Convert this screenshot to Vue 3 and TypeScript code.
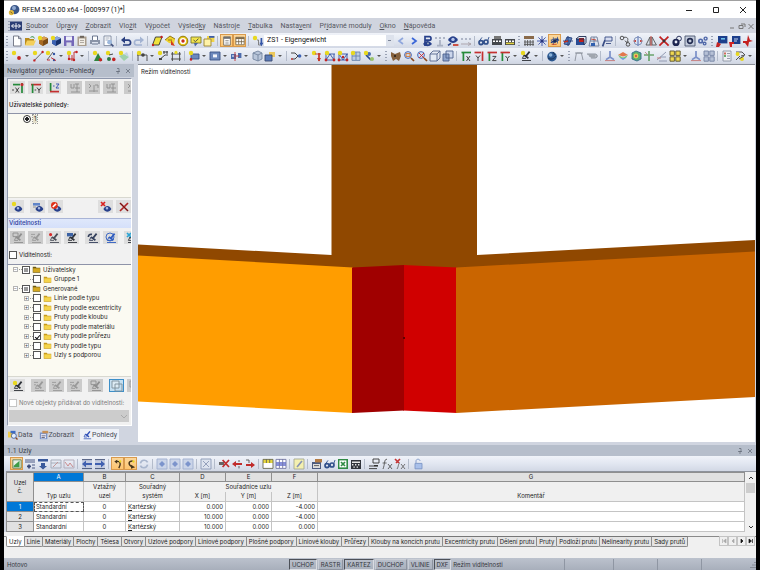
<script setup lang="ts">
import { h, ref } from 'vue'

type Shape = [paint: string, d: string]

const box = (x: number, y: number, w: number, k: number) => `M${x} ${y}h${w}v${k}h${-w}z`
const disc = (x: number, y: number, r: number) =>
  `M${x - r} ${y}a${r} ${r} 0 1 0 ${2 * r} 0a${r} ${r} 0 1 0 ${-2 * r} 0z`

const star: Shape = ['f#e8d820', disc(3, 3, 2.2)]
const eye: Shape[] = [
  ['f#27408b', 'M3.4 8c2-4 6-4 8 0-2 3.600-6 3.600-8 0z'],
  ['f#a8b8e0', disc(7, 7.2, 1.3)],
]
const lens: Shape[] = [
  ['f#cfe0f5', disc(5, 5, 3.6)],
  ['s#3b5bb0', disc(5, 5, 3.4)],
  ['t#8b4a20', 'M8 8l3 3'],
]
const scope = (c: string): Shape[] => [
  ['t' + c, 'M9.6 1.6L5.6 6.6M4 5l4.400 3.200'],
  ['s' + c, 'M4 5l-1.600 3.400H6'],
  ['s' + c, 'M2 10.5h9'],
]
const film = (c: string): Shape[] => [
  ['f' + c, box(1, 4, 10, 6)],
  ['f#fff', box(2, 5.4, 2, 1.6) + box(5, 5.4, 2, 1.6) + box(8, 5.4, 2, 1.6)],
]
const cube = (a: string, b: string, c: string): Shape[] => [
  ['f' + a, 'M2 4l5-2.4 4 1.6v5L6 11 2 8.6z'],
  ['f' + b, 'M2 4l4 1.8V11L2 8.6z'],
  ['f' + c, 'M2 4l5-2.4 4 1.6-5 2.6z'],
]
const crossX: Shape = ['s#333', 'M6.500 6l3.500 5M10 6l-3.500 5']
const letterY: Shape = ['s#333', 'M6.500 6l2 2.500L10.500 6M8.500 8.500V11']
const letterZ: Shape = ['s#333', 'M6.500 6.400H10L6.500 10.600H10.400']
const axis = (up: string, side: string, letter: Shape): Shape[] => [
  ['t' + up, 'M3.400 11V2.500'],
  ['t' + side, 'M1.500 2.500h9.500'],
  letter,
]

const glyphs: Record<string, Shape[]> = {
  logo: [['f#3a5688', disc(6.8, 5.6, 4.6)], ['f#8fa9d0', disc(6, 4, 2)], ['f#e0b840', disc(3.4, 8.6, 2.6)], ['s#6b5210', 'M2.4 7.6l2 2']],
  mdi: [['f#2b3d74', box(0, 1.5, 12, 9)], ['s#fff', 'M6 3v6M1.5 6h9M3.6 4L1.6 6l2 2M8.4 4l2 2-2 2']],
  page: [['f#fff', 'M2.5 1h5l2.5 2.6V11h-7.5z'], ['s#6c7080', 'M2.5 1h5l2.5 2.6V11h-7.5zM7.5 1v2.6H10']],
  open: [['f#b98a1c', 'M1 3h4l1 1h4v6H1z'], ['f#f4cf5c', 'M3 5.5h9l-2.4 5H1z'], ['s#2c8a34', 'M6.5 2.4c2-1.4 3.5-.6 4 1']],
  block: [...cube('#7a4a16', '#a86a24', '#dca050'), star],
  blueblock: [...cube('#16306c', '#3c62b4', '#86a4e0'), star],
  save: [['f#7468b8', box(1, 1, 10, 10)], ['f#eef0fa', box(3, 1.4, 6, 4)], ['f#d8dce8', box(3.4, 7.4, 5, 3.6)]],
  paste: [['f#a89c8c', box(1.5, 1.5, 9, 9.5)], ['f#f0ece4', box(3, 3.5, 6, 6.5)], ['f#6c645c', box(4, .8, 4, 2)], ['s#a8a298', 'M4 5.5h4M4 7.5h4']],
  print: [['f#fff', 'M3.5 1h4.5l1 4H3z'], ['f#8a94a8', box(1, 5, 10, 4)], ['f#dde3ef', box(3, 7, 6, 4)], ['s#596682', 'M3.5 5V1H8.5v4M3 9h6']],
  preview: [['f#fff', box(2, 1, 7, 9.6)], ['s#7b869c', box(2, 1, 7, 9.6)], ['s#9ca6b8', 'M3.5 3h4M3.5 5h3'], ['f#9db8dc', disc(7.6, 7.2, 2.4)], ['t#40507c', 'M9 9l2.4 2.4']],
  undo: [['t#2a3f80', 'M3 5.2h5.4c3 0 2.8 4.8 0 4.8H3'], ['f#2a3f80', 'M5 1.6v7L1 5z']],
  redo: [['t#a3b3d2', 'M9 5.2H3.6c-3 0-2.800 4.800 0 4.800h5.400'], ['f#a3b3d2', 'M7 1.6v7L11 5z']],
  plane: [['f#f0e23c', 'M4.5 2H11L8 10H1.5z'], ['s#333', 'M4.5 2H11L8 10H1.5z'], ['f#c02020', disc(2, 10, 1.2) + disc(10.6, 2, 1.2)]],
  tag: [['f#efd12c', 'M1 5l5-4 5 3-1 5-5-1z'], ['f#d23b20', 'M7 5l4 6-4-1z'], ['s#8a6f10', 'M1 5l5-4 5 3M4 5h4']],
  target: [['f#e8c81c', disc(6, 6, 5)], ['f#fff', disc(6, 6, 3.1)], ['f#c83018', disc(6, 6, 1.7)], ['s#8a7410', disc(6, 6, 4.8)]],
  note: [['f#f2e44c', box(1, 2, 10, 6)], ['s#7d7a30', box(1, 2, 10, 6)], ['f#4a64a0', 'M4 8h4l-3 3.4z'], ['s#444', 'M3.5 5l2 1.6 3-3']],
  windows: [['f#f2d54c', box(4, 1, 7.4, 6)], ['f#fff3a8', box(1, 4, 7, 7)], ['s#9a8430', box(1, 4, 7, 7)], ['f#3c5ca8', box(6, 1, 5.4, 1.8)]],
  navpane: [['f#fff', box(2, 1, 8, 10)], ['s#5b5b5b', box(2, 1, 8, 10)], ['f#707070', box(2, 1, 8, 2.4)], ['s#888', 'M4 5.4h4M4 7.4h4M4 9.4h4']],
  tablepane: [['f#fff', box(1, 1.5, 10, 9)], ['s#6b5a3c', box(1, 1.5, 10, 9) + 'M4.4 4v6M7.7 4v6M1 6.8h10'], ['f#7f6a48', box(1, 1.5, 10, 2.2)]],
  load: [star, ['s#777', 'M5 5h1.5v5H10'], ['t#3556a8', 'M9.4 3v6'], ['f#3556a8', 'M7.4 7.8h4l-2 3.4z']],
  prev: [['t#8fa6dc', 'M8 3L4 6l4 3']],
  next: [['t#3a66d8', 'M4 3l4 3-4 3']],
  eyeP: [['t#27408b', 'M4 11V1.6h4.5c2 0 2 3.6 0 3.6H4'], ['f#27408b', 'M2 9c3-4 6-4 9 0-3 3-6 3-9 0z'], ['f#9ab', disc(7, 8.4, 1)]],
  xx: [['s#a8b0c2', 'M1 2l2 2M3 2L1 4M5 2l2 2M7 2L5 4M9 2l2 2M11 2L9 4'], ['t#a8b0c2', 'M6 5v5M3 10.600h6']],
  eyeload: [['f#27408b', 'M1 5c3-5 7-5 10 0-3 4-7 4-10 0z'], ['f#b4c4ec', disc(6, 4.4, 1.7)], ['t#c83828', 'M6 10h5.4'], ['t#27408b', 'M1 10.4l3-2']],
  xxline: [['s#a8b0c2', 'M1 3l2 2M3 3L1 5M5 3l2 2M7 3L5 5M9 3l2 2M11 3L9 5'], ['s#a8a0a8', 'M1 9h10M8 7.500L11 9l-3 1.500']],
  glasses: [['t#32518c', disc(3, 7.6, 2) + disc(8, 7, 2)], ['s#32518c', 'M1.4 6L4 2.4M9.6 6l1.4-4']],
  filmprint: [['f#777', box(3, 1, 7, 4)], ...film('#44474c')],
  film: [...film('#44474c'), ['f#e0d040', box(2, 7.600, 8, 1.600)]],
  grid: [['f#8a6a4a', box(1, 1, 10, 3)], ['s#555', 'M2 5v6M4.6 5v6M7.2 5v6M10 5v6M1 7h10M1 9.4h10']],
  snow: [['s#3b50a8', 'M6 1v10M1 6h10M2.4 2.4l7.2 7.2M9.6 2.4L2.4 9.6'], ['f#26347c', disc(6, 6, 1.6)]],
  rotate3: [['s#2a4c94', 'M1 5l6-2 4 2-6 3zM4 1.500v9M9 1v8'], ['t#1c3c84', 'M1 8l9-4.500'], ['s#c03020', 'M2 10h6'], ['f#1c2c54', disc(6, 6, 2)]],
  rotate2: [['f#5c80bc', 'M2 9l3-7 5 1-3 7z'], ['s#24407c', 'M2 9l3-7 5 1-3 7zM1 6h10M6 1v10'], ['t#c03020', 'M2 7l4-1']],
  redcube: [['f#2a4c94', box(1, 4, 8, 6)], ['f#c42018', box(4, 3, 5, 4)], ['s#1c2c54', 'M1 4l3-2.500h7v6L9 10M9 10v-6H1']],
  wire: [['s#6c7c98', 'M3 2h6l2 9H1zM2 6h8M6 2v9'], ['f#3060b0', box(3, 8, 4, 3)], ['s#c04030', 'M3 4l5 1']],
  flag: [['t#384c84', 'M1.6 11.400L4 5'], ['f#d6dcf0', box(4, 2, 7, 4)], ['s#384c84', box(4, 2, 7, 4) + 'M5 8.5h5']],
  link: [['s#444', disc(3, 3, 1.8) + disc(9, 9.4, 1.8)], ['s#444', 'M4.600 2.400c5-1 5 2.600 3 5M6 5.600l1.600 2 2-1']],
  mirror: [['s#3b5cae', 'M6 1v10'], ['s#7a8cb4', disc(6, 6, 4)], ['f#c02c24', 'M4 5l-3 1 3 1zM8 5l3 1-3 1z']],
  tri: [['s#555', 'M5 2v8H1zM7 2v8h4.4z'], ['s#c02c24', 'M6 1v10']],
  cross: [['t#c42020', 'M1.6 1.6l9 9M10.4 1.6l-9 9'], ['f#333', disc(6, 6, 1.4)]],
  rings: [['f#1c2550', disc(5, 7.4, 3.6)], ['f#e8ecf8', disc(5, 7, 1.4)], ['s#1c2550', disc(8, 3.6, 2.4)]],
  gearbox: [['f#c4ccdc', box(1, 1, 10, 10)], ['s#4c5870', box(1, 1, 10, 10)], ['t#222c50', disc(6, 6, 2.4)]],
  gears: [['f#5068a8', disc(3.600, 6, 2.600) + disc(8.600, 3.600, 2.200) + disc(7.600, 8.600, 2)], ['f#dbe4f8', disc(3.600, 6, 1) + disc(8.600, 3.600, .8) + disc(7.600, 8.600, .7)]],
  monitor: [['f#1c3f8c', box(2, 1, 9.4, 7.4)], ['f#6fc0ea', box(5, 3, 4, 1.6)], ['f#c42424', 'M1 7l4 2-2 3H0z']],
  monitor2: [['f#1c3f8c', box(3, 1, 8.4, 8)], ['s#d8e4f8', 'M5 4h4M5 6h3'], ['f#d02424', 'M0 7h5v2H3v3H1z']],
  redarrow: [['f#c42020', 'M6 0l2 5 3 1-4 1-1 5-3-4H1V6h4z']],
  node: [star, ['f#c42424', disc(8, 8, 1.9)]],
  line: [star, ['s#555', 'M2.400 10.400L10.6 2'], ['f#c42424', disc(2.4, 10.4, 1.2) + disc(10.6, 2, 1.2)]],
  line2: [star, ['s#555', 'M2 10L8 2'], ['f#3454a4', disc(9, 4, 1.2) + disc(9, 10, 1.2)], ['s#c42424', 'M6 7.6l5 3M2 10h3']],
  poly: [star, ['s#c42424', 'M3 5v4h5V2h3M6 5v6'], ['f#c42424', disc(8, 10, 1.2) + disc(10.600, 2, 1.2) + disc(3, 9, 1.200)]],
  support: [['f#30843c', 'M6 3l4.4 8H2z'], ['f#c42424', disc(8.4, 9.8, 1.8)], star],
  hinge: [star, ['f#2c7844', disc(4, 9, 2)], ['f#c42424', disc(8.8, 9.4, 1.8)], ['s#333', 'M4 5l4-1']],
  surf: [['f#9ed0ac', 'M1 6l5-2 5 3-5 4z'], ['f#c2d4e4', 'M6 4l3-2 2 5z'], star],
  member: [['s#444', 'M1 5h10v6M2 2v9'], ['f#444', disc(7, 5, 1.8)], star],
  memberx: [star, ['s#333', 'M2 10L8 5h3'], ['s#333', 'M6 2h5M7 1v3M10 1v3'], ['f#444', box(2, 8, 3, 2)]],
  frame: [['s#444', 'M2.4 2v9M9.6 2v9M1 4h10M1 9h10'], ['f#e8d820', disc(6, 2.4, 1.6)]],
  solid: [['f#6c88bc', box(3, 4, 8, 5)], ['s#3a5486', box(3, 4, 8, 5)], ['f#c42424', disc(3, 9.4, 1.3)], star],
  opening: [['f#6c88bc', box(1, 2, 10, 8)], ['f#f2f4fa', box(4, 4.4, 4, 3)], ['s#3a5486', box(1, 2, 10, 8)]],
  couple: [['f#4c6cac', box(1, 4, 5, 5) + box(8, 3, 3.4, 5)], ['s#c03434', 'M6 6h3M5 2v9'], ['f#a4b8dc', box(2, 5, 2, 2)]],
  hex: [['f#b9c6da', 'M2 3l5-2 4 2v6l-4 2-5-2z'], ['s#75869f', 'M2 3l5-2 4 2v6l-4 2-5-2zM2 3l5 2 4-2M7 5v6']],
  cubes: [['f#5c7cb8', box(1, 5, 7, 6)], ['f#ecc85c', 'M5 2h6v5H8V5H5z'], ['s#3a4a70', box(1, 5, 7, 6)]],
  branch: [['s#333', 'M1 3h4l3 3-3 3H1M8 6h3'], ['f#3c62b4', disc(9.6, 6, 1.8)], ['f#c44', disc(2, 9, 1)]],
  dim: [star, ['t#c43424', 'M8 3v8'], ['s#c43424', 'M4 4h6'], ['f#c43424', 'M6 8h4L8 11.4z']],
  truss: [['s#3454a4', 'M1 4h10M2 4v6h8V4M2 10l4-6 4 6'], ['f#c42424', disc(2, 10, 1.4) + disc(10, 10, 1.4)], star],
  truss2: [['s#3454a4', 'M1 4h10M2 4v6h8V4M2 4l4 6 4-6'], ['f#c42424', disc(2, 10, 1.400) + disc(10, 10, 1.4) + disc(6, 7, 1.200)], star],
  net: [['f#b9cbe4', box(2, 2, 8, 8.4)], ['s#6b84ad', 'M2 2h8v8.4H2zM6 2v8M2 6h8'], star],
  loads: [['f#4c6cac', disc(6, 4, 2)], ['t#27488c', 'M3 5l5 5'], ['f#9ac36a', disc(9, 9, 2)], star],
  ibex: [['f#84603c', 'M1 2l4 2 5-2 1 4-2 5-3-2-3 2-2-5z'], ['f#3a2c20', box(4, 5, 2, 2)]],
  zoomwin: [...lens, ['s#d07028', box(3, 3.600, 4, 2.800)]],
  zoomred: [...lens, ['s#d02828', 'M3 3l5 5M8 3L3 8']],
  box3d: [['f#e4eaf4', box(1, 4, 7, 7)], ['s#56678e', box(1, 4, 7, 7) + 'M1 4l3-3h7v7L8 11M8 4l3-3']],
  copy3d: [['f#ccd6ec', box(4, 1, 7, 7)], ['f#8ea4cc', box(1, 4, 6, 7)], ['s#4c608c', box(1, 4, 6, 7) + box(4, 1, 7, 7)]],
  axX: axis('#258a3a', '#258a3a', crossX),
  axY: [['t#c43030', 'M1.500 2.500H8'], ['t#c43030', 'M9.500 1.500V11'], ['s#333', 'M3 5.500l2 2.500 2-2.500M5 8v3']],
  axZ: axis('#258a3a', '#c43030', letterZ),
  axN: axis('#258a3a', '#c43030', letterY),
  xz: [['t#258a3a', 'M1 2.600h7'], ['t#258a3a', 'M10 1v10'], ['f#c43030', disc(10, 2.600, 1.600)], ['s#333', 'M0 8h2M3.500 5.600l3.400 5M7 5.600l-3.400 5']],
  yz: [['t#c43030', 'M1 2.6h10'], ['t#258a3a', 'M2.6 2v9'], ['s#333', 'M4.600 8h1.600M7 5.600l2 2.600 2-2.600M9 8v3']],
  zz: [['t#258a3a', 'M2.6 1v8'], ['t#c43030', 'M2 9.6h9'], ['s#3450b0', 'M5 4h1.600M8 2h3L8 6h3']],
  grey: [['s#8e8e8e', 'M2 2v4h3V2M8 2v8M6 2h4M6 6h5M2 10h9']],
  grey2: [['s#8e8e8e', 'M2 2l2 2-2 2M8 3h3v3M7 3v7M2 9h9']],
  scopey: [...scope('#2e3138'), star],
  globe: [['f#2c5890', disc(6, 6.6, 4.8)], ['f#8ab2d8', disc(4.6, 5, 1.8)], ['s#183050', 'M2 8c3 2 6 1 8-2M7 2l2 3']],
  arch: [['s#8b919c', 'M2 11L3.4 3h5L10 10M2 3h8']],
  roll: [['f#b6bac2', 'M1 4h8c3 0 3 4 0 4H5z'], ['s#878e9a', 'M1 4h8c3 0 3 4 0 4H5M3 6h6']],
  triad: [['t#7a8fc8', 'M6 1v6M2 9.600l4-2.600 4 2.600'], ['s#c47474', 'M1 10.600h10']],
  iso: [['f#e2774c', 'M1 5l5-3 5 3-5 1.4z'], ['f#7cc47c', 'M1 5l5 2.4L11 5 9 8H3z'], ['f#6c9cdc', 'M3 8h6l-3 2z']],
  mesh: [['f#5cae6c', 'M2 3l4-2 5 2v6l-4 2-5-2z'], ['f#e4cf58', disc(6, 6, 2.4)], ['f#d05c4c', disc(6, 6, 1.2)], ['s#346c8c', 'M2 3l4-2 5 2v6l-4 2-5-2z']],
  plus: [['t#6aa46c', 'M6 1v10M1 5h10'], ['s#b88', 'M2 2l3 3']],
  slope: [['s#8a93ac', 'M1 10L10 2M3 11h8M4 7h6'], ['s#c47474', 'M1 8h4']],
  quads: [['f#f0d850', box(1, 1, 4.4, 4.4) + box(6.8, 1, 4.4, 4.4) + box(1, 6.8, 4.4, 4.4) + box(6.8, 6.8, 4.4, 4.4)], ['s#5a5330', box(1, 1, 4.4, 4.4) + box(6.8, 1, 4.4, 4.4) + box(1, 6.8, 4.4, 4.4) + box(6.8, 6.8, 4.4, 4.4)]],
  bquads: [['f#b6c1d6', box(1, 1, 4.4, 4.4) + box(6.8, 1, 4.4, 4.4) + box(1, 6.8, 4.4, 4.4) + box(6.8, 6.8, 4.4, 4.4)], ['s#7483a4', box(1, 1, 4.4, 4.4) + box(6.8, 1, 4.4, 4.4) + box(1, 6.8, 4.4, 4.4) + box(6.8, 6.8, 4.4, 4.4)]],
  list: [['f#eef0f4', box(2, 1, 8, 10)], ['s#8c94a4', box(2, 1, 8, 10) + 'M6 3.5h3M6 6h3M6 8.5h3'], ['f#6aae6c', box(3, 5, 2, 2)], ['f#d06c5c', box(3, 2.4, 2, 2)]],
  wand: [['s#444', 'M2 2h6l3 3-4 1M2 10l4-4'], ['f#e8d820', disc(3.600, 4, 2) + disc(8, 9, 2)], ['s#444', 'M5 9l5-3']],
  eyestar: [star, ...eye],
  eyelist: [['f#5f84c8', box(1, 2, 7, 2.6)], ['s#888', 'M1 6h3'], ...eye],
  eyeban: [...eye, ['f#e03018', disc(4.4, 4.4, 3.4)], ['t#fff', 'M2.8 6l3.2-3.2']],
  eyex: [...eye, ['t#d82020', 'M1 1l4 4M5 1L1 5']],
  del: [['t#b02020', 'M2 2l8 8M10 2l-8 8'], ['s#5c1818', 'M2 2l8 8']],
  scopeg: [...scope('#8f8f8f'), ['s#8f8f8f', box(1, 1, 5, 3.6)]],
  scopeg2: [...scope('#9a9a9a'), ['s#9a9a9a', 'M1 2.4h4M1 4.8h2']],
  scoper: [...scope('#4a4e58'), ['f#d82c2c', disc(2.6, 2.6, 1.6)]],
  scopeb: [...scope('#2e3138'), ['f#3c62a4', box(1, 1, 6, 3.4)]],
  scopec: [...scope('#34405c'), ['t#34405c', 'M1.400 5c0-2 1-3 3.600-2.600']],
  scopeblue: [...scope('#2f5cc0'), ['s#2f5cc0', disc(5, 5, 4)]],
  scopex: [...scope('#2e3138'), ['t#2ca4d4', 'M1 1l4 4M5 1L1 5']],
  layers: [['f#dcebf4', box(1, 1, 7, 7)], ['s#7e8f98', box(1, 1, 7, 7) + box(4, 4, 7, 7)]],
  layersg: [['s#999', box(1, 1, 6, 6) + box(4, 4, 7, 7)]],
  folder: [['f#c79a1c', 'M1 2.4h4l1 1.2h5v6.6H1z'], ['f#f4d44c', box(1.6, 4.4, 9, 5.2)]],
  folderdk: [['f#6c5a14', 'M1 2.4h4l1 1.2h5v6.6H1z'], ['f#d4a820', box(1.6, 4.4, 9, 5.2)]],
  data: [['f#f0cc4c', box(0, 2, 6, 7)], ['f#3c6cc4', box(3, 1, 6, 3)], ['f#e4eefc', disc(7, 7, 3)], ['s#2c4c94', disc(7, 7, 3)], ['t#8b4a20', 'M9.4 9.4l2 2']],
  display: [['f#7c94c8', box(1, 3, 9, 8)], ['f#eef', box(2.4, 5, 6, 5)], ['f#c89054', box(4, 1, 7, 3)], ['s#445', 'M3 7h5M3 9h4']],
  views: scope('#2f50b8'),
  graph: [['f#e8efe4', box(1, 1, 10, 10)], ['f#3f9c48', 'M2 10V8l7-6v8z'], ['s#45704a', box(1, 1, 10, 10)]],
  rowadd: [['s#3a4a78', 'M1 2h10M1 4h10'], ['t#3a4a78', 'M3 8.4h4M5 6.4v4'], ['s#3a4a78', 'M8 7h3M8 10h3']],
  rowins: [['f#3a5a9c', 'M1 1h10v2.4H1zM4 5h4v3h2L6 11.6 2 8h2z']],
  rowg: [['s#a2a8b6', 'M1 2h10v8H1zM1 5h10'], ['s#c09090', 'M3 9l5-5']],
  rowg2: [['s#b0a8b6', 'M1 2h10v8H1z'], ['s#c88080', 'M2 4l3 4 2-3 3 4']],
  tleft: [['f#c4cce0', box(1, 2, 10, 9)], ['f#4060b0', 'M1 6l4-3.4V5h6v2H5v2.4z'], ['s#3a4a70', 'M1 10.600h10M1 1.600h10']],
  tright: [['f#c4cce0', box(1, 2, 10, 9)], ['f#4060b0', 'M11 6L7 2.600V5H1v2h6v2.4z'], ['s#3a4a70', 'M1 10.6h10M1 1.600h10']],
  hookl: [['t#45351c', 'M4 3c5-1 6 3 3 8'], ['f#45351c', 'M5 .8v5L1.6 3z'], ['f#e8d820', disc(8.6, 3, 1.4)]],
  hookr: [['t#45351c', 'M8 2.4c-5 0-6 4-1 7'], ['f#45351c', 'M6 6.8l5 3-5 2z'], ['f#e8d820', disc(9, 3, 1.4)]],
  refresh: [['t#a9b6cd', 'M2.4 5.400c1-4 6-4 7.2-1M9.6 6.600c-1 4-6 4-7.2 1']],
  cellg: [['f#cad4e8', box(1, 1, 10, 10)], ['s#9fafcf', box(1, 1, 10, 10)], ['f#7c94cc', 'M6 3l3 3-3 3-3-3z']],
  cellx: [['f#dde3ee', box(1, 1, 10, 10)], ['s#8b98b4', box(1, 1, 10, 10) + 'M3 3l6 6M9 3L3 9']],
  rx: [['f#666', box(1, 4, 5, 3)], ['t#c02c2c', 'M4.600 2l6.400 7M11 2L4.600 9']],
  rin: [['f#c02c2c', 'M1 6l4-3v2h6v2H5v2z'], ['s#555', 'M8 2v2M8 8v2.4']],
  rout: [['f#c02c2c', 'M11 7L7 4v2H2v2h5v2z'], ['s#555', 'M2 2h3v3']],
  yellowtab: [['f#fff', box(1, 1.4, 10, 9)], ['f#e8d840', box(1, 1.4, 10, 3.6)], ['s#6a6a50', box(1, 1.4, 10, 9) + 'M4.4 1v4M7.7 1v4']],
  bluetab: [['f#fff', box(1, 1.4, 10, 9)], ['f#8790dc', box(1, 4, 10, 4)], ['s#7478a4', box(1, 1.4, 10, 9) + 'M4.4 1v9M7.7 1v9']],
  pickcell: [['f#f4f0b0', box(1, 1, 10, 10)], ['s#a4a894', box(1, 1, 10, 10)], ['t#8894b4', 'M9 3L4 9']],
  props: [['f#4c5c80', box(1, 4, 9, 7)], ['f#ddd', box(2, 6, 7, 4)], ['f#b47c44', box(4, 1, 7, 3.4)], ['s#555', 'M3 7.600h5']],
  excel: [['f#2f8a44', box(1, 1, 10, 10)], ['f#fff', box(2.4, 2.4, 7, 7)], ['t#2f8a44', 'M4 4l4 4M8 4L4 8']],
  calc: [['f#30343c', box(1, 2, 10, 9)], ['f#e8e8e8', box(2, 3.400, 8, 1.600) + box(2, 6, 1.4, 1.4) + box(5, 6, 1.4, 1.4) + box(8, 6, 1.4, 1.4) + box(3.400, 8.400, 1.4, 1.4) + box(6.600, 8.400, 1.4, 1.4)]],
  legend: [['s#333', box(5, 1, 6, 4) + 'M1 8h5M1 10.6h8'], ['f#333', box(6, 7, 4, 1.6)]],
  fx: [['s#555', 'M6 1.4c-3-1-2 5-4 9.600M1.6 5h4M7 6l4 5M11 6l-4 5']],
  fxr: [['s#666', 'M7 6l4 5M11 6l-4 5M6 5c-2 0-1 3-3 6'], ['t#c43434', 'M1 1l4 4M6 1L2 5']],
  lock: [['f#a9c0ea', box(3, 5.4, 7, 5.4)], ['s#7d96c6', box(3, 5.4, 7, 5.4) + 'M4 5V3c0-2.4 4-2.4 4 0']],
}

// Paint prefix: f = fill, s = thin stroke, t = thick stroke.
const Ico = (p: { n: string }) =>
  h(
    'svg',
    { class: 'ico', viewBox: '0 0 12 12', 'aria-hidden': 'true' },
    (glyphs[p.n] ?? []).map(([paint, d]) => {
      const color = paint.slice(1)
      return paint[0] === 'f'
        ? h('path', { d, fill: color })
        : h('path', { d, fill: 'none', stroke: color, 'stroke-width': paint[0] === 's' ? 0.9 : 1.7 })
    }),
  )

// '|' separator, ':' grip, '>' drop arrow, '*name' pressed, 'combo' load case list.
const barA =
  ': page open block blueblock save paste print preview | undo redo | plane tag target note windows | *navpane *tablepane | load combo prev next eyeP xx eyeload xxline | glasses filmprint film : grid snow *rotate3 rotate2 redcube wire flag | link mirror tri cross rings gearbox gears : monitor monitor2 redarrow'.split(' ')
const barB =
  ': node > line line2 > poly > | support hinge surf | member > memberx frame | solid > opening > couple > hex cubes > | branch > dim truss truss2 net loads > : ibex zoomwin zoomred box3d copy3d | axX axY axZ axN > scopey > | globe > : arch roll | triad iso mesh plus slope quads > triad bquads | list wand >'.split(' ')
const barC =
  '*graph rowadd rowins rowg rowg2 | tleft tright | *hookl *hookr refresh | cellg cellg cellg | cellx | rx rin rout | yellowtab bluetab | pickcell | props glasses excel calc | legend fx fxr | lock'.split(' ')

const menus: [string, string, string][] = [
  ['', 'S', 'oubor'], ['Úpr', 'a', 'vy'], ['', 'Z', 'obrazit'], ['Vlo', 'ž', 'it'], ['V', 'ý', 'počet'],
  ['Výsled', 'k', 'y'], ['Nástro', 'j', 'e'], ['', 'T', 'abulka'], ['Nasta', 'v', 'ení'], ['Př', 'í', 'davné moduly'],
  ['', 'O', 'kno'], ['', 'N', 'ápověda'],
]

interface TreeRow { label: string; level: number; state: 'mixed' | 'on' | 'off'; sign: string }
const tree = ref<TreeRow[]>([
  { label: 'Uživatelsky', level: 0, state: 'mixed', sign: '−' },
  { label: 'Gruppe 1', level: 1, state: 'off', sign: '' },
  { label: 'Generované', level: 0, state: 'mixed', sign: '−' },
  { label: 'Linie podle typu', level: 1, state: 'off', sign: '+' },
  { label: 'Pruty podle excentricity', level: 1, state: 'off', sign: '+' },
  { label: 'Pruty podle kloubu', level: 1, state: 'off', sign: '+' },
  { label: 'Pruty podle materiálu', level: 1, state: 'off', sign: '+' },
  { label: 'Pruty podle průřezu', level: 1, state: 'on', sign: '+' },
  { label: 'Pruty podle typu', level: 1, state: 'off', sign: '+' },
  { label: 'Uzly s podporou', level: 1, state: 'off', sign: '+' },
])

const nodes = [
  { no: 1, x: '0.000', y: '0.000', z: '-4.000' },
  { no: 2, x: '10.000', y: '0.000', z: '-4.000' },
  { no: 3, x: '10.000', y: '0.000', z: '0.000' },
]

const sheets = [
  'Uzly', 'Linie', 'Materiály', 'Plochy', 'Tělesa', 'Otvory', 'Uzlové podpory', 'Liniové podpory', 'Plošné podpory',
  'Liniové klouby', 'Průřezy', 'Klouby na koncích prutu', 'Excentricity prutu', 'Dělení prutu', 'Pruty',
  'Podloží prutu', 'Nelinearity prutu', 'Sady prutů',
]
const sheet = ref('Uzly')

const modes = [
  { name: 'UCHOP', on: true }, { name: 'RASTR', on: false }, { name: 'KARTEZ', on: true },
  { name: 'DUCHOP', on: false }, { name: 'VLINIE', on: false }, { name: 'DXF', on: true },
]
</script>

<template>
  <div class="window">
    <header class="title">
      <Ico n="logo" />
      <h1>RFEM 5.26.00 x64 - [000997 (1)*]</h1>
      <div class="winbtns">
        <button aria-label="Minimalizovat"><svg viewBox="0 0 8 8"><path d="M1 4.5h6" /></svg></button>
        <button aria-label="Maximalizovat"><svg viewBox="0 0 8 8"><path d="M1.5 1.5h5v5h-5z" /></svg></button>
        <button aria-label="Zavřít"><svg viewBox="0 0 8 8"><path d="M1 1l6 6M7 1L1 7" /></svg></button>
      </div>
    </header>

    <nav class="menu">
      <i class="grip"></i>
      <Ico n="mdi" />
      <a v-for="m in menus" :key="m.join('')" href="#">{{ m[0] }}<u>{{ m[1] }}</u>{{ m[2] }}</a>
      <div class="docbtns">
        <button aria-label="Minimalizovat dokument"><svg viewBox="0 0 8 8"><path d="M1 6h4" /></svg></button>
        <button aria-label="Obnovit dokument"><svg viewBox="0 0 8 8"><path d="M1 3.5h4v3H1zM3 2h4v3" /></svg></button>
        <button aria-label="Zavřít dokument"><svg viewBox="0 0 8 8"><path d="M1.5 2l5 5M6.5 2l-5 5" /></svg></button>
      </div>
    </nav>

    <div v-for="(bar, b) in [barA, barB]" :key="b" class="bar" role="toolbar">
      <template v-for="(t, i) in bar" :key="i">
        <i v-if="t === '|'" class="sep"></i>
        <i v-else-if="t === ':'" class="grip"></i>
        <button v-else-if="t === '>'" class="drop" aria-label="Další"></button>
        <select v-else-if="t === 'combo'" class="combo" aria-label="Zatěžovací stav">
          <option>ZS1 - Eigengewicht</option>
        </select>
        <button v-else class="tool" :class="{ pressed: t[0] === '*' }" :aria-label="t.replace('*', '')">
          <Ico :n="t.replace('*', '')" />
        </button>
      </template>
    </div>

    <main class="work">
      <aside class="nav">
        <h2 class="caption">
          <span>Navigátor projektu - Pohledy</span>
          <svg viewBox="0 0 6 6"><path d="M1 3.5h4M2 .5h2v3H2M3 3.5V6" /></svg>
          <svg viewBox="0 0 6 6"><path d="M1 1l4 4M5 1L1 5" /></svg>
        </h2>
        <div class="panel">
          <div class="btnrow first">
            <button aria-label="Pohled X"><Ico n="xz" /></button>
            <button aria-label="Pohled Y"><Ico n="yz" /></button>
            <button aria-label="Pohled Z" class="gap"><Ico n="zz" /></button>
            <button disabled aria-label="Pohled 4"><Ico n="grey" /></button>
            <button disabled aria-label="Pohled 5"><Ico n="grey2" /></button>
            <button disabled aria-label="Pohled 6" class="gap"><Ico n="grey" /></button>
            <button disabled aria-label="Pohled 7"><Ico n="grey2" /></button>
          </div>
          <h3 class="label">Uživatelské pohledy:</h3>
          <div class="list views">
            <label><input type="radio" name="view" checked /><span>1</span></label>
          </div>
          <div class="btnrow second">
            <button aria-label="Nový pohled" class="gap"><Ico n="eyestar" /></button>
            <button aria-label="Upravit pohled"><Ico n="eyelist" /></button>
            <button aria-label="Zrušit pohled" class="push"><Ico n="eyeban" /></button>
            <button aria-label="Smazat pohled"><Ico n="eyex" /></button>
            <button aria-label="Smazat vše"><Ico n="del" /></button>
          </div>
          <h3 class="section">Viditelnosti</h3>
          <div class="btnrow">
            <button disabled aria-label="Viditelnost 1"><Ico n="scopeg" /></button>
            <button disabled aria-label="Viditelnost 2"><Ico n="scopeg2" /></button>
            <button aria-label="Viditelnost 3"><Ico n="scoper" /></button>
            <button aria-label="Viditelnost 4" class="gap"><Ico n="scopeb" /></button>
            <button aria-label="Viditelnost 5"><Ico n="scopec" /></button>
            <button aria-label="Viditelnost 6" class="gap"><Ico n="scopeblue" /></button>
            <button aria-label="Viditelnost 7"><Ico n="scopex" /></button>
          </div>
          <label class="check"><input type="checkbox" /><span>Viditelnosti:</span></label>
          <div class="list treebox">
            <ul class="tree">
              <li v-for="r in tree" :key="r.label" :class="'lv' + r.level">
                <i :class="r.sign ? 'sign' : 'stub'">{{ r.sign }}</i>
                <label>
                  <input type="checkbox" :class="{ mixed: r.state === 'mixed' }" :checked="r.state === 'on'" />
                  <Ico :n="r.level ? 'folder' : 'folderdk'" />
                  <span>{{ r.label }}</span>
                </label>
              </li>
            </ul>
          </div>
          <div class="btnrow third">
            <button aria-label="Nová skupina" class="gap"><Ico n="scopey" /></button>
            <button disabled aria-label="Skupina 2"><Ico n="scopeg2" /></button>
            <button disabled aria-label="Skupina 3"><Ico n="scopeg2" /></button>
            <button disabled aria-label="Skupina 4" class="gap"><Ico n="scopeg2" /></button>
            <button disabled aria-label="Skupina 5" class="gap"><Ico n="scopeg" /></button>
            <button class="active" aria-label="Průnik"><Ico n="layers" /></button>
            <button disabled aria-label="Sjednocení"><Ico n="layersg" /></button>
          </div>
          <label class="check dim"><input type="checkbox" disabled /><span>Nové objekty přidávat do viditelnosti:</span></label>
          <select class="target" disabled aria-label="Nové objekty přidávat do viditelnosti"></select>
        </div>
        <div class="navtabs">
          <button><Ico n="data" />Data</button>
          <button><Ico n="display" />Zobrazit</button>
          <button class="on"><Ico n="views" />Pohledy</button>
        </div>
      </aside>

      <section class="view">
        <svg viewBox="138 65 617 377" preserveAspectRatio="none">
          <path fill="#904800" d="M138 244.500L331.500 255V60H477v195L755 240v14L456 270H352L138 258z" />
          <path fill="#ff9d00" d="M138 255.500L353 267.500V413L138 401.500z" />
          <path fill="#d00000" d="M403 265L457 267.500V413L403 410.500z" />
          <path fill="#a00000" d="M352 267.500L404 265V410.500L352 413z" />
          <path fill="#ca6500" d="M456 267.500L755 251.500V397L456 413z" />
          <path fill="#600000" d="M403 337h2v2h-2z" />
        </svg>
        <span>Režim viditelnosti</span>
      </section>
    </main>

    <section class="dock">
      <h2 class="caption">
        <span>1.1 Uzly</span>
        <svg viewBox="0 0 6 6"><path d="M1 3.5h4M2 .5h2v3H2M3 3.5V6" /></svg>
        <svg viewBox="0 0 6 6"><path d="M1 1l4 4M5 1L1 5" /></svg>
      </h2>
      <div class="bar lower" role="toolbar">
        <template v-for="(t, i) in barC" :key="i">
          <i v-if="t === '|'" class="sep"></i>
          <button v-else class="tool" :class="{ pressed: t[0] === '*' }" :aria-label="t.replace('*', '')">
            <Ico :n="t.replace('*', '')" />
          </button>
        </template>
      </div>
      <div class="sheet">
        <table>
          <colgroup>
            <col class="w27" /><col class="w50" /><col class="w42" /><col class="w54" />
            <col class="w46" /><col class="w46" /><col class="w46" /><col />
          </colgroup>
          <thead>
            <tr class="letters">
              <th rowspan="3" class="corner">Uzel<br />č.</th>
              <th class="sel">A</th><th>B</th><th>C</th><th>D</th><th>E</th><th>F</th><th>G</th>
            </tr>
            <tr class="head top">
              <th></th><th>Vztažný</th><th>Souřadný</th><th colspan="3">Souřadnice uzlu</th><th></th>
            </tr>
            <tr class="head">
              <th>Typ uzlu</th><th>uzel</th><th>systém</th><th>X [m]</th><th>Y [m]</th><th>Z [m]</th><th>Komentář</th>
            </tr>
          </thead>
          <tbody>
            <tr v-for="(n, i) in nodes" :key="n.no">
              <th :class="{ sel: i === 0 }">{{ n.no }}</th>
              <td :class="{ focus: i === 0 }">Standardní</td>
              <td class="mid">0</td>
              <td><u>K</u>artézský</td>
              <td class="num">{{ n.x }}</td>
              <td class="num">{{ n.y }}</td>
              <td class="num">{{ n.z }}</td>
              <td></td>
            </tr>
          </tbody>
        </table>
        <div class="scroll">
          <button aria-label="Nahoru"><svg viewBox="0 0 6 6"><path d="M1 4l2-2 2 2" /></svg></button>
          <i></i>
          <button aria-label="Dolů"><svg viewBox="0 0 6 6"><path d="M1 2l2 2 2-2" /></svg></button>
        </div>
      </div>
      <div class="tabs">
        <button v-for="s in sheets" :key="s" :class="{ on: s === sheet }" @click="sheet = s">{{ s }}</button>
        <div class="pager">
          <button disabled aria-label="První"><svg viewBox="0 0 6 6"><path d="M1.500 1v4M5 1L2.500 3 5 5z" /></svg></button>
          <button disabled aria-label="Předchozí"><svg viewBox="0 0 6 6"><path d="M4 1L2 3l2 2z" /></svg></button>
          <button aria-label="Následující"><svg viewBox="0 0 6 6"><path d="M2 1l2 2-2 2z" /></svg></button>
          <button aria-label="Poslední"><svg viewBox="0 0 6 6"><path d="M4.500 1v4M1 1l2.500 2L1 5z" /></svg></button>
        </div>
      </div>
    </section>

    <footer class="status">
      <span class="ready">Hotovo</span>
      <button v-for="m in modes" :key="m.name" :class="{ on: m.on }">{{ m.name }}</button>
      <span class="mode">Režim viditelnosti</span>
      <i class="cell wide"></i><i class="cell"></i><i class="cell"></i><i class="cell wide"></i>
      <svg class="resize" viewBox="0 0 6 6"><path d="M5 0v1M5 2.500v1M3 2.500v1M5 5v1M3 5v1M1 5v1" /></svg>
    </footer>
  </div>
</template>

<style>
body {
  background: #000;
}
</style>

<style scoped>
* {
  box-sizing: border-box;
}
.window {
  display: flex;
  flex-direction: column;
  min-height: 100vh;
  margin: 0 4px;
  border-top: 1px solid #a0a0a0;
  background: #d0d5e0;
  color: #1c1c1c;
  font: 6px/8px Inter, sans-serif;
}
button {
  margin: 0;
  padding: 0;
  border: 0;
  background: none;
  color: inherit;
  font: inherit;
}
select,
input {
  margin: 0;
  font: inherit;
  appearance: none;
}
h1,
h2,
h3,
ul {
  margin: 0;
  padding: 0;
  font: inherit;
  list-style: none;
}
svg {
  display: block;
}
.ico {
  flex: none;
  width: 12px;
  height: 12px;
}
.title {
  display: flex;
  align-items: center;
  gap: 2px;
  height: 17px;
  padding-left: 4px;
  background: #fff;
  color: #111;
}
.title,
.menu,
.combo,
.caption,
.navtabs {
  font: 7px/10px Roboto, sans-serif;
}
.winbtns {
  display: flex;
  margin-left: auto;
}
.winbtns button {
  display: grid;
  place-items: center;
  width: 27px;
  height: 16px;
}
.winbtns svg,
.docbtns svg {
  width: 8px;
  height: 8px;
  fill: none;
  stroke: #222;
}
.docbtns svg {
  stroke: #777;
}
.menu {
  display: flex;
  align-items: center;
  gap: 8px;
  height: 15px;
  padding-left: 2px;
  background: #d0d4de;
  color: #54575e;
}
.menu .ico {
  margin: 0 -4px 0 -10px;
}
.menu a {
  color: inherit;
  text-decoration: none;
  white-space: nowrap;
}
.docbtns {
  display: flex;
  gap: 1px;
  margin: 0 1px 0 auto;
}
.bar {
  display: flex;
  align-items: center;
  height: 15px;
  padding-left: 2px;
  overflow: hidden;
  background: linear-gradient(#f0f3f9, #e2e7f1 50%, #d2d8e5);
}
.grip {
  flex: none;
  width: 2px;
  height: 10px;
  margin: 0 2px;
  background: repeating-linear-gradient(#9aa2b4 0 1px, transparent 1px 3px);
}
.bar .grip:first-child {
  margin: 0 2px 0 0;
}
.sep {
  flex: none;
  width: 1px;
  height: 10px;
  margin: 0 2px;
  background: #b4bccb;
}
.tool {
  display: grid;
  flex: none;
  place-items: center;
  width: 13px;
  height: 13px;
}
.tool.pressed {
  background: linear-gradient(#fbd9a0, #fdc36c);
  box-shadow: inset 0 0 0 1px #d99a4c;
}
.tool.pressed .ico {
  width: 10px;
  height: 10px;
}
.drop {
  display: grid;
  flex: none;
  place-items: center;
  width: 8px;
  height: 13px;
}
.drop::before {
  border: 2px solid transparent;
  border-top-color: #555;
  border-bottom: 0;
  content: '';
}
.combo {
  flex: none;
  width: 130px;
  height: 11px;
  padding: 0 3px;
  border: 0;
  background: linear-gradient(#7c8598, #7c8598) right 3px center / 3px 1px no-repeat, linear-gradient(to left, #dde2ec 8px, #fff 8px);
  color: #111;
  line-height: 11px;
}
.work {
  display: flex;
  flex: 1;
  gap: 4px;
  padding-top: 1px;
}
.nav {
  display: flex;
  flex: none;
  flex-direction: column;
  width: 130px;
}
.caption {
  display: flex;
  align-items: center;
  gap: 4px;
  height: 13px;
  padding: 0 3px;
  background: #b6becb;
  color: #3e434c;
}
.caption span {
  flex: 1;
}
.caption svg {
  width: 6px;
  height: 6px;
  fill: none;
  stroke: #6a717e;
  stroke-width: 0.8;
}
.panel {
  display: flex;
  flex: 1;
  flex-direction: column;
  margin: 1px 2px 3px 3px;
  border: 1px solid #fff;
  border-left-color: #8e97ac;
  border-top-color: #8e97ac;
  background: #f1f1f1;
}
.btnrow {
  display: flex;
  gap: 3px;
  padding: 2px 0 0 2px;
  overflow: hidden;
}
.btnrow.first {
  height: 22px;
}
.btnrow.second {
  height: 20px;
  padding-left: 1px;
}
.btnrow.third {
  height: 19px;
}
.btnrow button {
  display: grid;
  flex: none;
  place-items: center;
  width: 15px;
  height: 13px;
  background: #dedede;
}
.btnrow button:disabled {
  background: #cbcbcb;
}
.btnrow button.gap {
  margin-right: 3px;
}
.btnrow button.push {
  margin-right: 32px;
}
.btnrow button.active {
  background: #c5dff0;
  box-shadow: inset 0 0 0 1px #3d8fc8;
}
.label {
  height: 12px;
  padding: 0 1px;
  font-weight: 500;
}
.list {
  border-top: 1px solid #8e93a8;
  border-bottom: 1px solid #d8d8d0;
  background: #fbfaf2;
}
.views {
  flex: 1 0 85px;
  padding: 1px 0 0 15px;
}
.views label {
  display: flex;
  align-items: center;
  gap: 2px;
}
.views input {
  width: 8px;
  height: 8px;
  border: 1px solid #333;
  border-radius: 50%;
  background: radial-gradient(#222 0 2px, #fff 2px);
}
.views span {
  padding: 0 1px;
  background: #e4e0cc;
  outline: 1px dotted #999;
}
.section {
  height: 10px;
  margin-bottom: 1px;
  padding-left: 1px;
  border-top: 1px solid #a9b4d6;
  background: linear-gradient(#dfe8fb, #d5e0fa);
  color: #2a3a9c;
  font-weight: 500;
}
.check {
  display: flex;
  align-items: center;
  gap: 2px;
  height: 20px;
  padding: 2px 0 0 1px;
  white-space: nowrap;
}
.check input,
.tree input {
  flex: none;
  width: 8px;
  height: 8px;
  border: 1px solid #555;
  background: #fff;
}
.check.dim {
  height: 14px;
  padding-top: 0;
  color: #7b7b7b;
}
.check.dim input {
  border-color: #c4c4c4;
}
.treebox {
  height: 113px;
}
.tree {
  display: grid;
  grid-auto-rows: 1fr;
  height: 95px;
}
.tree li,
.tree label {
  display: flex;
  align-items: center;
  gap: 2px;
  white-space: nowrap;
}
.tree .lv0 {
  padding-left: 5px;
}
.tree .lv1 {
  padding-left: 16px;
}
.tree .ico {
  width: 9px;
  height: 9px;
}
.tree input.mixed {
  border-color: #555;
  background: #999;
  box-shadow: inset 0 0 0 1px #fff;
}
.tree input:checked {
  display: grid;
  place-items: center;
}
.tree input:checked::before {
  width: 2px;
  height: 4px;
  border: solid #111;
  border-width: 0 1px 1px 0;
  content: '';
  rotate: 40deg;
}
.sign,
.stub {
  position: relative;
  width: 5px;
  height: 5px;
  margin-right: 2px;
  color: #333;
  font: 5px/3px 'Liberation Sans', sans-serif;
  text-align: center;
}
.sign {
  background: #fff;
  box-shadow: inset 0 0 0 1px #b4b4b4;
  line-height: 5px;
}
.sign::after,
.stub::after {
  position: absolute;
  top: 2px;
  left: 6px;
  width: 3px;
  border-top: 1px dotted #999;
  content: '';
}
.target {
  height: 12px;
  margin: 0 2px 3px 1px;
  border: 0;
  border-radius: 0;
  background:
    linear-gradient(45deg, transparent 45%, #aaa 45% 60%, transparent 60%) right 5px center / 3px 3px no-repeat,
    linear-gradient(-45deg, transparent 45%, #aaa 45% 60%, transparent 60%) right 2px center / 3px 3px no-repeat,
    #ccc;
  opacity: 1;
}
.navtabs {
  display: flex;
  gap: 6px;
  height: 12px;
  margin-bottom: 1px;
  padding-left: 4px;
  color: #4a4e57;
}
.navtabs button {
  display: flex;
  align-items: center;
  height: 12px;
}
.navtabs .ico {
  width: 10px;
  height: 10px;
}
.navtabs .on {
  padding: 0 2px;
  background: #eef1f7;
}
.view {
  position: relative;
  flex: 1;
  margin-right: 1px;
  border-top: 1px solid #8a8f98;
  background: #fff;
}
.view svg {
  position: absolute;
  inset: 0;
  width: 100%;
  height: 100%;
}
.view span {
  position: absolute;
  top: 3px;
  left: 3px;
}
.dock {
  display: flex;
  flex-direction: column;
  margin-top: 3px;
}
.dock .caption {
  height: 11px;
}
.lower {
  padding-left: 6px;
}
.sheet {
  display: flex;
  margin-left: 2px;
  border-top: 1px solid #8e939c;
  background: #f0f0f0;
}
table {
  flex: 1;
  width: 100%;
  table-layout: fixed;
  border-collapse: collapse;
}
th,
td {
  height: 10px;
  padding: 0 2px;
  border: 1px solid #c4c4c4;
  background: #fff;
  font-weight: 400;
  line-height: 8px;
  white-space: nowrap;
}
th {
  background: #f0f0f0;
}
.w27 { width: 27px; }
.w50 { width: 50px; }
.w42 { width: 42px; }
.w54 { width: 54px; }
.w46 { width: 46px; }
.letters th,
tbody th {
  border-color: #8f8f8f;
  background: #e1e1e1;
}
.letters th {
  height: 9px;
}
.letters th.sel,
tbody th.sel {
  background: #0078d7;
  color: #fff;
}
.head.top th {
  border-bottom: 0;
}
.head th {
  border-top: 0;
}
.mid {
  text-align: center;
}
.num {
  text-align: right;
}
.focus {
  outline: 1px dashed #555;
  outline-offset: -1px;
}
.scroll {
  display: flex;
  flex-direction: column;
  justify-content: space-between;
  width: 11px;
}
.scroll button {
  display: grid;
  place-items: center;
  height: 11px;
}
.scroll svg,
.pager svg {
  width: 6px;
  height: 6px;
  fill: none;
  stroke: #333;
}
.scroll i {
  flex: none;
  height: 10px;
  margin: 0 1px auto;
  background: #cdcdcd;
}
.tabs {
  display: flex;
  align-items: flex-start;
  height: 26px;
  padding: 0 1px 0 2px;
  border-top: 4px solid #f0f0f0;
  background: linear-gradient(#8a8a8a 1px, #f0f0f0 1px);
}
.tabs > button {
  height: 11px;
  padding: 0 2px;
  border: 1px solid #8c8c8c;
  border-top-color: #777;
  border-radius: 0 0 2px 2px;
  background: #e4e4e4;
  white-space: nowrap;
}
.tabs > button + button {
  margin-left: -1px;
}
.tabs > button.on {
  border-top-color: #fff;
  background: #fff;
}
.pager {
  display: flex;
  margin-left: auto;
}
.pager button {
  display: grid;
  place-items: center;
  width: 9px;
  height: 10px;
  box-shadow: inset 0 0 0 1px #c4c4c4;
}
.pager svg {
  fill: #111;
  stroke: #111;
  stroke-width: 0.7;
}
.pager button:disabled svg {
  fill: #aaa;
  stroke: #aaa;
}
.status {
  display: flex;
  align-items: center;
  gap: 1px;
  height: 13px;
  background: linear-gradient(#bcc2cd, #a6adba);
  color: #33363c;
}
.ready {
  flex: 0 0 284px;
  padding-left: 3px;
}
.status button {
  height: 11px;
  padding: 0 2px;
  border: 1px solid #c9cdd5;
  border-right-color: #8d939f;
  border-bottom-color: #8d939f;
}
.status button.on {
  border: 1px solid #4c5058;
  border-right-color: #d9dce2;
  border-bottom-color: #d9dce2;
}
.mode {
  margin: 0 auto 0 1px;
}
.cell {
  width: 43px;
  height: 11px;
  border-left: 1px solid #8f96a3;
}
.cell.wide {
  width: 48px;
}
.resize {
  width: 6px;
  height: 6px;
  stroke: #60656f;
  fill: none;
}
</style>
